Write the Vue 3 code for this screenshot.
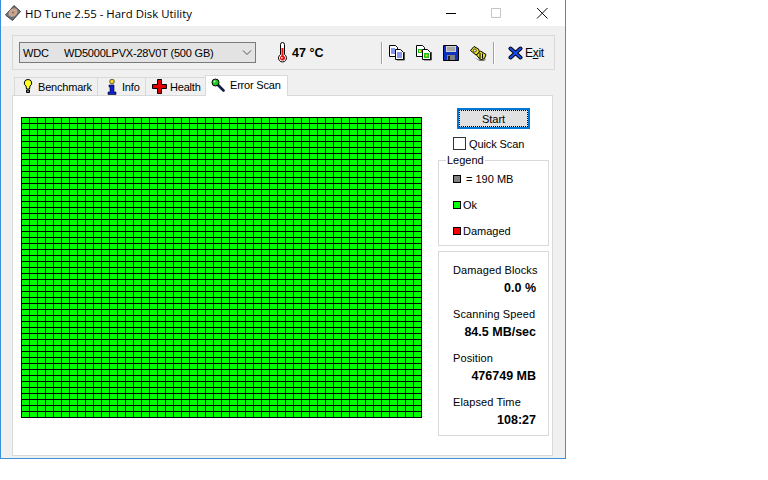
<script setup>
import { ref } from 'vue'

const tabs = ref([
  { name: 'Benchmark', icon: 'bulb' },
  { name: 'Info', icon: 'info' },
  { name: 'Health', icon: 'cross' },
  { name: 'Error Scan', icon: 'lens', active: true },
])

const legend = ref([
  { text: '= 190 MB', color: '#808080', spaced: true },
  { text: 'Ok', color: '#00ff00' },
  { text: 'Damaged', color: '#ff0000' },
])

const stats = ref([
  { label: 'Damaged Blocks', value: '0.0 %' },
  { label: 'Scanning Speed', value: '84.5 MB/sec' },
  { label: 'Position', value: '476749 MB' },
  { label: 'Elapsed Time', value: '108:27' },
])
</script>

<template>
  <div class="window">
    <div class="titlebar">
      <svg class="app-icon" width="16" height="16" viewBox="0 0 16 16">
        <path d="M.5 10 9 .5l6.500 6-8 9z" fill="#6d7478" stroke="#3c4246" />
        <ellipse cx="8" cy="7.500" rx="5" ry="3.800" fill="#c9a58c" transform="rotate(-40 8 7.500)" />
        <circle cx="8" cy="7.500" r="1" fill="#7d6a60" />
      </svg>
      <span class="title">HD Tune 2.55 - Hard Disk Utility</span>
      <div class="caption-buttons">
        <svg width="46" height="26" viewBox="0 0 46 26"><path d="M19 13.500h10" stroke="#000" fill="none" /></svg>
        <svg width="46" height="26" viewBox="0 0 46 26"><path d="M18.500 8.500h9v9h-9z" stroke="#c4c4c4" fill="none" /></svg>
        <svg width="46" height="26" viewBox="0 0 46 26"><path d="M18 8l10.500 10.500M28.500 8 18 18.500" stroke="#111" fill="none" /></svg>
      </div>
    </div>

    <div class="body">
      <div class="toolbar">
        <div class="combo">
          <span class="combo-vendor">WDC</span>
          <span class="combo-model">WD5000LPVX-28V0T (500 GB)</span>
          <svg class="combo-arrow" width="10" height="6" viewBox="0 0 10 6"><path d="M1 .5l4 4 4-4" stroke="#555" fill="none" /></svg>
        </div>
        <svg class="thermo" width="11" height="21" viewBox="0 0 11 21">
          <path d="M3.500 2.500a2 2 0 0 1 4 0v10a4 4 0 1 1-4 0z" fill="#fff" stroke="#000" />
          <path d="M4.500 6h2v7.500l1.500 1.500v2l-1.500 1.500h-2L3 17v-2l1.500-1.500z" fill="#e81010" />
          <rect x="4" y="15" width="1.500" height="1.500" fill="#fff" />
        </svg>
        <span class="temp">47 °C</span>
        <div class="tool-sep first"></div>
        <svg class="tool" width="16" height="16" viewBox="0 0 16 16">
          <path d="M8 14h7.500v1.500H8zM15 7h1v8h-1z" fill="#555" />
          <path d="M.5.500h6l2 2v9H.500z" fill="#fff" stroke="#000" />
          <path d="M6.500 4.500h5l3 3v7h-8z" fill="#fff" stroke="#000" />
          <path d="M2 4h4M2 6h4M2 8h4M8 8h5M8 10h5M8 12h5" stroke="#1030e0" />
        </svg>
        <svg class="tool" width="16" height="16" viewBox="0 0 16 16">
          <path d="M8 14h7.500v1.500H8zM15 7h1v8h-1z" fill="#555" />
          <path d="M.5.500h6l2 2v9H.500z" fill="#fff" stroke="#000" />
          <path d="M6.500 4.500h5l3 3v7h-8z" fill="#fff" stroke="#000" />
          <rect x="2" y="4" width="4" height="4" fill="#20c020" />
          <rect x="3" y="5" width="2" height="2" fill="#f0e020" />
          <rect x="8" y="8" width="5" height="5" fill="#20c020" />
          <rect x="9.500" y="9.500" width="2" height="2" fill="#f0e020" />
        </svg>
        <svg class="tool" width="16" height="16" viewBox="0 0 16 16">
          <path d="M.5.500h13l2 2v13H.500z" fill="#1030c0" stroke="#000" />
          <rect x="3" y="1" width="10" height="6" fill="#d0d0d0" />
          <path d="M4 3h8M4 5h8" stroke="#808080" />
          <rect x="4" y="10" width="8" height="5" fill="#808080" />
          <rect x="5" y="11" width="2" height="4" fill="#202020" />
        </svg>
        <svg class="tool" width="17" height="16" viewBox="0 0 17 16">
          <path d="M4 12l6 3.500 6-1.500-1 1.500-5 1z" fill="#666" />
          <path d="M.5 5.500 4 1.500 8.500 4l1 3-3.500 3z" fill="#e8e020" stroke="#000" />
          <circle cx="4.800" cy="5.500" r="1.500" fill="#f0f0f0" stroke="#000" stroke-width=".7" />
          <path d="M6.500 10 10.500 6 16 9.500l-1.500 4-4 1.500z" fill="#e8e020" stroke="#000" />
          <path d="M10 8v6M12.500 8.500v5" stroke="#000" />
        </svg>
        <div class="tool-sep"></div>
        <button class="exit-btn">
          <svg width="15" height="14" viewBox="0 0 15 14">
            <path d="M2.500 2.500l10 9M12.500 2.500l-10 9" stroke="#000" stroke-width="4" stroke-linecap="round" />
            <path d="M2.500 2.500l10 9M12.500 2.500l-10 9" stroke="#1848e8" stroke-width="2.200" stroke-linecap="round" />
          </svg>
          <span>E<u>x</u>it</span>
        </button>
      </div>

      <div class="tabs">
        <div v-for="tab in tabs" :key="tab.name" class="tab" :class="[tab.icon, { active: tab.active }]">
          <svg v-if="tab.icon === 'bulb'" width="10" height="15" viewBox="0 0 10 15">
            <path d="M5 .5a3.500 3.500 0 0 1 2 6.500L6.500 10h-3L3 7A3.500 3.500 0 0 1 5 .5z" fill="#ffff20" stroke="#000" />
            <path d="M3.500 11h3v2.500h-3z" fill="#808080" stroke="#000" />
          </svg>
          <svg v-if="tab.icon === 'info'" width="10" height="16" viewBox="0 0 10 16">
            <circle cx="5" cy="2.500" r="2.300" fill="#ffd820" stroke="#000" stroke-width=".6" />
            <path d="M2 6h5v7h2v2.500H1V13h2V8H2z" fill="#1020d0" stroke="#000" stroke-width=".6" />
          </svg>
          <svg v-if="tab.icon === 'cross'" width="15" height="15" viewBox="0 0 15 15">
            <path d="M5.500.5h4v5h5v4h-5v5h-4v-5h-5v-4h5z" fill="#e00000" stroke="#000" />
          </svg>
          <svg v-if="tab.icon === 'lens'" width="14" height="14" viewBox="0 0 14 14">
            <path d="M6.500 6.500l6 6" stroke="#102040" stroke-width="2.600" stroke-linecap="round" />
            <circle cx="4.500" cy="4.500" r="3.500" fill="#18d018" stroke="#000" />
            <circle cx="3.500" cy="3.500" r="1" fill="#c8ffc8" />
          </svg>
          <span>{{ tab.name }}</span>
        </div>
      </div>

      <div class="panel">
        <div class="grid"></div>
        <div class="side">
          <button class="start">Start</button>
          <label class="quick"><span class="check"></span>Quick Scan</label>
          <fieldset class="legend">
            <legend>Legend</legend>
            <div v-for="item in legend" :key="item.text" class="legend-row">
              <span class="swatch" :style="{ background: item.color }"></span>
              <span :class="{ spaced: item.spaced }">{{ item.text }}</span>
            </div>
          </fieldset>
          <div class="stats">
            <div v-for="s in stats" :key="s.label" class="stat">
              <div class="stat-label">{{ s.label }}</div>
              <div class="stat-value">{{ s.value }}</div>
            </div>
          </div>
        </div>
      </div>
    </div>
  </div>
</template>

<style>
html, body {
  background: #fff;
}
</style>

<style scoped>
.window {
  width: 566px;
  height: 459px;
  box-sizing: border-box;
  border: 1px solid #3d8edb;
  border-top: 0;
  display: flex;
  flex-direction: column;
  font-family: "Liberation Sans", Arial, sans-serif;
  font-size: 11px;
  color: #000;
  overflow: hidden;
}

.titlebar {
  height: 26px;
  flex: none;
  display: flex;
  align-items: center;
  background: #fff;
  padding-left: 4px;
}
.app-icon {
  margin-right: 4px;
}
.title {
  font-family: "Open Sans", sans-serif;
  font-size: 11.4px;
}
.caption-buttons {
  margin-left: auto;
  display: flex;
}

.body {
  flex: 1;
  background: #f0f0f0;
  padding: 9px 12px 2px 11px;
  display: flex;
  flex-direction: column;
}

.toolbar {
  height: 35px;
  box-sizing: border-box;
  border: 1px solid #d9d9d9;
  width: 543px;
  display: flex;
  align-items: center;
  padding-left: 6px;
  flex: none;
}
.combo {
  width: 237px;
  height: 21px;
  box-sizing: border-box;
  border: 1px solid #7a7a7a;
  background: #e3e3e3;
  display: flex;
  align-items: center;
  padding-left: 3px;
  letter-spacing: -0.2px;
}
.combo-vendor {
  width: 41px;
}
.combo-arrow {
  margin-left: auto;
  margin-right: 3px;
}
.thermo {
  margin-left: 21px;
}
.temp {
  margin-left: 4px;
  font-weight: bold;
  font-size: 12.5px;
  width: 89px;
}
.tool-sep {
  width: 1px;
  height: 22px;
  background: #a0a0a0;
  border-right: 1px solid #fff;
  margin-right: 6px;
}
.tool {
  margin-right: 11px;
}
.tool-sep:not(.first) {
  margin-left: -5px;
  margin-right: 0;
}
.exit-btn {
  border: 0;
  background: none;
  padding: 0 0 0 13px;
  display: flex;
  align-items: center;
  gap: 2px;
  font: inherit;
  font-size: 12px;
  letter-spacing: -0.3px;
}

.tabs {
  display: flex;
  margin-top: 5px;
  padding-left: 2px;
  height: 20px;
  flex: none;
  align-items: flex-end;
  position: relative;
  z-index: 1;
  letter-spacing: -0.2px;
}
.tab {
  height: 18px;
  box-sizing: border-box;
  border: 1px solid #d9d9d9;
  border-bottom: 0;
  margin-right: -1px;
  background: #f0f0f0;
  display: flex;
  align-items: center;
}
.tab.bulb {
  width: 84px;
  padding-left: 8px;
  gap: 5px;
}
.tab.info {
  width: 49px;
  padding-left: 9px;
  gap: 5px;
}
.tab.cross {
  width: 61px;
  padding-left: 6px;
  gap: 3px;
}
.tab.lens {
  width: 83px;
  padding-left: 5px;
  gap: 5px;
}
.tab.active {
  height: 21px;
  background: #fff;
  margin-bottom: -1px;
  padding-bottom: 3px;
}

.panel {
  flex: 1;
  width: 541px;
  box-sizing: border-box;
  background: #fff;
  border: 1px solid #d9d9d9;
  display: flex;
  align-items: flex-start;
  padding: 21px 0 0 8px;
}
.grid {
  width: 401px;
  height: 301px;
  flex: none;
  background-color: #00ff00;
  background-image:
    linear-gradient(to right, #000 1px, transparent 1px),
    linear-gradient(to bottom, #000 1px, transparent 1px);
  background-size: 8px 6px;
}

.side {
  margin-left: 16px;
  margin-top: -9px;
  width: 111px;
  display: flex;
  flex-direction: column;
}
.start {
  width: 73px;
  height: 21px;
  margin-left: 19px;
  box-sizing: border-box;
  background: #e1e1e1;
  border: 2px solid #0078d7;
  outline: 1px dotted #000;
  outline-offset: -3px;
  padding: 0;
  font: inherit;
}
.quick {
  display: flex;
  align-items: center;
  margin: 8px 0 0 15px;
  height: 13px;
  gap: 3px;
  letter-spacing: -0.1px;
}
.check {
  width: 13px;
  height: 13px;
  box-sizing: border-box;
  border: 1px solid #333;
  background: #fff;
}
.legend {
  margin: 4px 0 0;
  padding: 0 0 0 10px;
  height: 92px;
  box-sizing: border-box;
  border: 1px solid #d9d9d9;
  min-width: 0;
}
.legend legend {
  padding: 0 1px;
  margin-left: -3px;
  line-height: 13px;
}
.legend-row {
  height: 26px;
  display: flex;
  align-items: center;
  gap: 2px;
  margin-left: 4px;
}
.legend legend + .legend-row {
  margin-top: -1px;
}
.swatch {
  width: 8px;
  height: 8px;
  box-sizing: border-box;
  border: 1px solid #000;
}
.spaced {
  margin-left: 3px;
}
.stats {
  margin-top: 5px;
  height: 185px;
  box-sizing: border-box;
  border: 1px solid #d9d9d9;
  padding: 11px 12px 0 14px;
}
.stat {
  height: 44px;
}
.stat-label {
  line-height: 14px;
  white-space: nowrap;
  letter-spacing: 0.1px;
}
.stat-value {
  margin-top: 4px;
  line-height: 15px;
  text-align: right;
  font-weight: bold;
  font-size: 12.5px;
}
</style>
